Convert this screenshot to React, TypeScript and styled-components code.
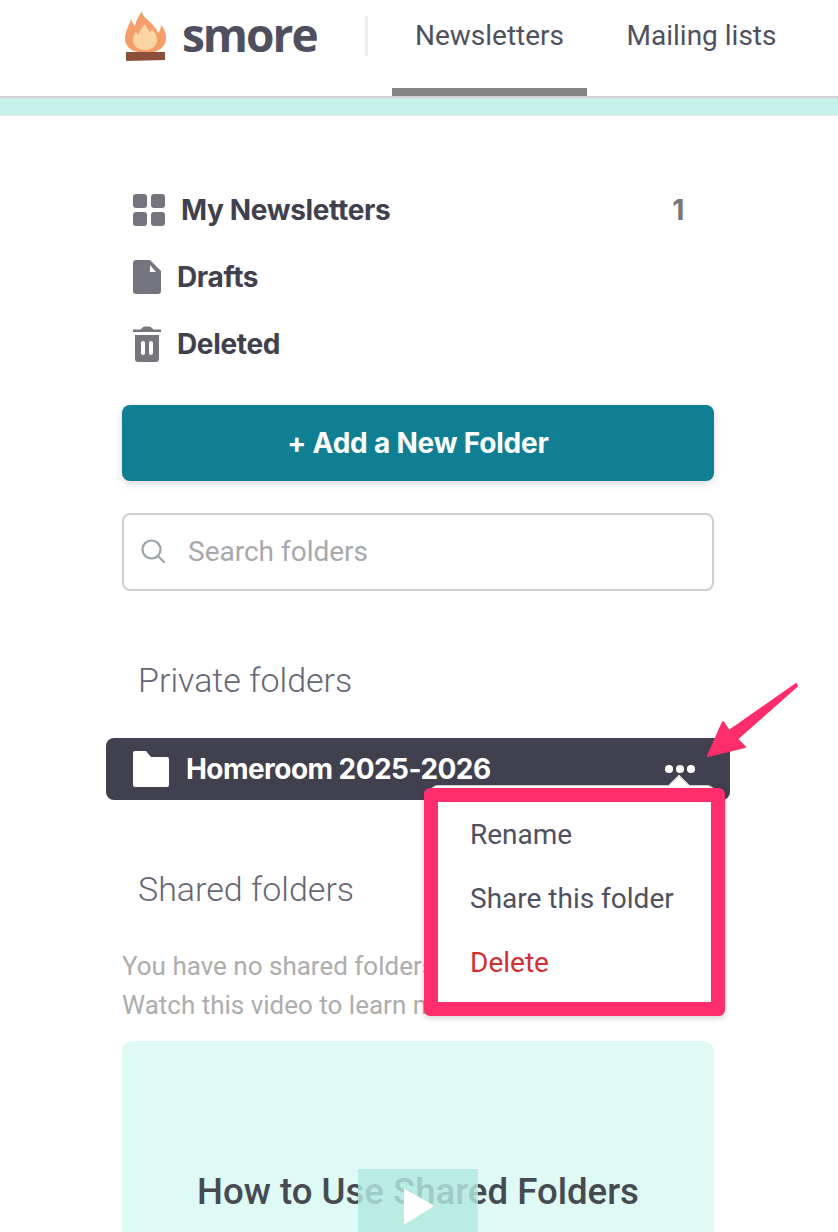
import React from "react";
import styled, { createGlobalStyle } from "styled-components";

const GlobalStyle = createGlobalStyle`
  html, body {
    margin: 0;
    padding: 0;
    background: #fff;
    font-family: Roboto, "Liberation Sans", sans-serif;
    overflow: hidden;
  }
  * { box-sizing: border-box; }
`;

const Page = styled.div`
  position: relative;
  width: 838px;
  height: 1232px;
  overflow: hidden;
`;

const Header = styled.header`
  display: flex;
  align-items: flex-start;
  height: 98px;
  padding-left: 125px;
  background: #fff;
  border-bottom: 2px solid #d2d2d4;
`;

const Logo = styled.div`
  display: flex;
  align-items: flex-start;
  gap: 15px;
  width: 240px;
  height: 64px;
  padding-top: 11px;
`;

const LogoText = styled.span`
  margin-top: -4px;
  font-family: "Open Sans", sans-serif;
  font-size: 46px;
  font-weight: 700;
  line-height: 54px;
  letter-spacing: -2px;
  color: #4f4f60;
`;

const Divider = styled.div`
  width: 3px;
  height: 40px;
  margin: 16px 24px 0 0;
  background: #eeeeee;
`;

const Tab = styled.div<{ $active?: boolean; $width: number }>`
  display: flex;
  justify-content: center;
  width: ${(p) => p.$width}px;
  height: 96px;
  padding-top: 19px;
  font-size: 28px;
  line-height: 34px;
  color: #4f5160;
  border-bottom: 8px solid ${(p) => (p.$active ? "#848484" : "transparent")};
`;

const Band = styled.div`
  height: 18px;
  background: #c5f1e9;
  border-bottom: 1px solid #e4ece9;
`;

const Sidebar = styled.main`
  display: flex;
  flex-direction: column;
  width: 592px;
  margin-left: 122px;
  padding-top: 60px;
`;

const NavRow = styled.div<{ $gap: number }>`
  display: flex;
  align-items: center;
  gap: ${(p) => p.$gap}px;
  height: 67px;
  padding: 0 30px 0 11px;
  font-family: Inter, Roboto, sans-serif;
  font-size: 28px;
  font-weight: 650;
  letter-spacing: -0.35px;
  color: #41404f;
`;

const NavLabel = styled.span`
  flex: 1;
`;

const Count = styled.span`
  color: #75757f;
`;

const AddButton = styled.button`
  height: 76px;
  margin-top: 28px;
  padding-bottom: 2px;
  border: 0;
  border-radius: 8px;
  background: #117f93;
  box-shadow: 0 3px 8px rgba(0, 0, 0, 0.14);
  color: #fff;
  font-family: Inter, Roboto, sans-serif;
  font-size: 28px;
  font-weight: 650;
  letter-spacing: -0.2px;
`;

const SearchBox = styled.div`
  display: flex;
  align-items: center;
  gap: 22px;
  height: 78px;
  margin-top: 32px;
  padding: 0 0 2px 16px;
  border: 2px solid #cfcfd2;
  border-radius: 8px;
  font-size: 28px;
  color: #a9a9ad;
`;

const SectionTitle = styled.div`
  padding-left: 16px;
  font-size: 34px;
  font-weight: 300;
  line-height: 40px;
  color: #666674;
`;

const PrivateTitle = styled(SectionTitle)`
  margin-top: 69px;
`;

const SharedTitle = styled(SectionTitle)`
  margin-top: 69px;
`;

const FolderRow = styled.div`
  position: relative;
  display: flex;
  align-items: center;
  gap: 17px;
  width: 624px;
  height: 62px;
  margin: 38px 0 0 -16px;
  padding-left: 27px;
  border-radius: 8px;
  background: #41404f;
  color: #fff;
  font-family: Inter, Roboto, sans-serif;
  font-size: 28px;
  font-weight: 650;
  letter-spacing: -0.55px;
`;

const Dots = styled.div`
  position: absolute;
  top: 27px;
  left: 559px;
  display: flex;
  gap: 3.5px;
`;

const Dot = styled.span`
  width: 7.5px;
  height: 7.5px;
  border-radius: 50%;
  background: #fff;
`;

const MenuEdge = styled.div`
  position: absolute;
  z-index: 1;
  top: 785px;
  left: 430px;
  width: 285px;
  height: 20px;
  background: #fff;
  border-top: 1px solid #cfcfcf;
  border-radius: 8px 8px 0 0;
`;

const Caret = styled.div`
  position: absolute;
  z-index: 1;
  top: 778px;
  left: 671px;
  width: 16px;
  height: 16px;
  background: #fff;
  border-top: 1px solid #cfcfcf;
  border-left: 1px solid #cfcfcf;
  transform: rotate(45deg);
`;

const Menu = styled.div`
  position: absolute;
  z-index: 2;
  top: 788px;
  left: 424px;
  display: flex;
  flex-direction: column;
  width: 301px;
  height: 228px;
  padding: 15px 0 0 32px;
  background: #fff;
  border: 14px solid #ff2d6b;
  border-radius: 6px;
  box-shadow: 0 2px 6px rgba(0, 0, 0, 0.18);
`;

const MenuItem = styled.div<{ $danger?: boolean }>`
  flex: none;
  height: 64px;
  font-size: 28px;
  line-height: 36px;
  color: ${(p) => (p.$danger ? "#d32f2f" : "#4f5062")};
`;

const Note = styled.p`
  margin: 38px 0 0;
  font-size: 26px;
  line-height: 39px;
  color: #adadad;
  white-space: nowrap;
`;

const VideoCard = styled.div`
  position: relative;
  flex: none;
  display: flex;
  justify-content: center;
  height: 220px;
  margin-top: 16px;
  padding-top: 128px;
  border-radius: 10px 10px 0 0;
  background: #dff9f5;
  font-size: 36.6px;
  font-weight: 500;
  line-height: 46px;
  color: #484a52;
`;

const PlayOverlay = styled.div`
  position: absolute;
  top: 128px;
  left: 236px;
  display: flex;
  align-items: center;
  justify-content: center;
  width: 120px;
  height: 92px;
  padding-bottom: 18px;
  background: rgba(178, 233, 225, 0.82);
`;

const Arrow = styled.svg`
  position: absolute;
  z-index: 3;
  top: 680px;
  left: 700px;
`;

const Flame = () => (
  <svg width="42" height="50" viewBox="0 0 42 50">
    <path
      d="M17 0c0 5 5 8 10 13 3 3 5 6 6 9 2-2 3-5 3-8 3 3 5 8 5 13 0 9-8 15-20 15S0 37 0 28c0-8 4-13 6-20 1 3 2 5 4 7 1-6 4-10 7-15z"
      fill="#f59e69"
    />
    <path
      d="M20 13c1 3 3 5 5 8 1-1 2-2 2-3 3 3 5 7 5 11 0 6-5 10-12 10S8 35 8 29c0-3 1-6 3-8 1 1 2 2 2 3 1-4 4-7 7-11z"
      fill="#fbd4a3"
    />
    <path d="M1 41h39v8l-38 1a1 1 0 0 1-1-1z" fill="#8a5039" />
  </svg>
);

const GridIcon = () => (
  <svg width="32" height="32" viewBox="0 0 32 32" fill="#75757f">
    <rect x="0" y="0" width="14" height="14" rx="3" />
    <rect x="18" y="0" width="14" height="14" rx="3" />
    <rect x="0" y="18" width="14" height="14" rx="3" />
    <rect x="18" y="18" width="14" height="14" rx="3" />
  </svg>
);

const DraftIcon = () => (
  <svg width="28" height="34" viewBox="0 0 28 34">
    <path
      d="M3 0h14l11 11v20a3 3 0 0 1-3 3H3a3 3 0 0 1-3-3V3a3 3 0 0 1 3-3z"
      fill="#75757f"
    />
    <path d="M17 5l6 7h-6z" fill="#fff" />
  </svg>
);

const TrashIcon = () => (
  <svg width="28" height="36" viewBox="0 0 28 36">
    <path d="M0 3.5h8C9 1 11 .5 14 .5s5 .5 6 3h8V6H0z" fill="#75757f" />
    <path d="M2 9h24v24a3 3 0 0 1-3 3H5a3 3 0 0 1-3-3z" fill="#75757f" />
    <rect x="8" y="15" width="4" height="14" rx="2" fill="#fff" />
    <rect x="16" y="15" width="4" height="14" rx="2" fill="#fff" />
  </svg>
);

const SearchIcon = () => (
  <svg width="26" height="26" viewBox="0 0 26 26" fill="none" stroke="#9aa3ab" strokeWidth="2.2">
    <circle cx="11.5" cy="11.5" r="9" />
    <path d="M18 18l6 6" strokeLinecap="round" />
  </svg>
);

const FolderIcon = () => (
  <svg width="36" height="36" viewBox="0 0 36 36" fill="#fff">
    <path d="M2 0h11l5 6h16a2 2 0 0 1 2 2v26a2 2 0 0 1-2 2H2a2 2 0 0 1-2-2V2a2 2 0 0 1 2-2z" />
  </svg>
);

const PlayIcon = () => (
  <svg width="30" height="36" viewBox="0 0 30 36">
    <path d="M2 2l26 15a1 1 0 0 1 0 2L2 35z" fill="#fff" stroke="#fff" strokeLinejoin="round" strokeWidth="2" />
  </svg>
);

const App: React.FC = () => {
  return (
    <Page>
      <GlobalStyle />
      <Header>
        <Logo>
          <Flame />
          <LogoText>smore</LogoText>
        </Logo>
        <Divider />
        <Tab $active $width={195}>Newsletters</Tab>
        <Tab $width={229}>Mailing lists</Tab>
      </Header>
      <Band />
      <Sidebar>
        <NavRow $gap={16}>
          <GridIcon />
          <NavLabel>My Newsletters</NavLabel>
          <Count>1</Count>
        </NavRow>
        <NavRow $gap={16}>
          <DraftIcon />
          <NavLabel>Drafts</NavLabel>
        </NavRow>
        <NavRow $gap={16}>
          <TrashIcon />
          <NavLabel>Deleted</NavLabel>
        </NavRow>
        <AddButton>+ Add a New Folder</AddButton>
        <SearchBox>
          <SearchIcon />
          Search folders
        </SearchBox>
        <PrivateTitle>Private folders</PrivateTitle>
        <FolderRow>
          <FolderIcon />
          Homeroom 2025-2026
          <Dots>
            <Dot />
            <Dot />
            <Dot />
          </Dots>
        </FolderRow>
        <SharedTitle>Shared folders</SharedTitle>
        <Note>
          You have no shared folders yet.
          <br />
          Watch this video to learn more.
        </Note>
        <VideoCard>
          How to Use Shared Folders
          <PlayOverlay>
            <PlayIcon />
          </PlayOverlay>
        </VideoCard>
      </Sidebar>
      <MenuEdge />
      <Caret />
      <Menu>
        <MenuItem>Rename</MenuItem>
        <MenuItem>Share this folder</MenuItem>
        <MenuItem $danger>Delete</MenuItem>
      </Menu>
      <Arrow width="100" height="80" viewBox="0 0 100 80">
        <path
          d="M96 4L29 51l-6-9L8 76l37-9-8-8 60-53z"
          fill="#ff2d6b"
          stroke="#ff2d6b"
          strokeWidth="2"
          strokeLinejoin="round"
        />
      </Arrow>
    </Page>
  );
};

export default App;
